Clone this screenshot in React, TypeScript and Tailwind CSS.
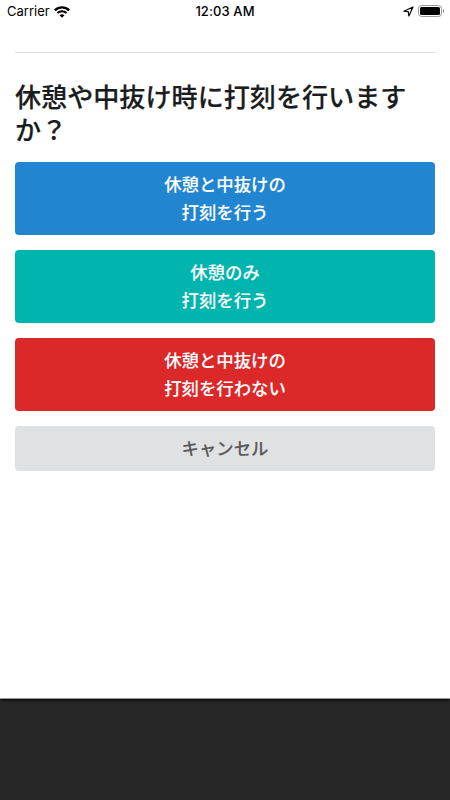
import clsx from "clsx";

const actions = [
  { lines: ["休憩と中抜けの", "打刻を行う"], color: "bg-[#2185d0]" },
  { lines: ["休憩のみ", "打刻を行う"], color: "bg-[#00b5ad]" },
  { lines: ["休憩と中抜けの", "打刻を行わない"], color: "bg-[#db2828]" },
];

const WifiIcon = () => (
  <svg width="16" height="12" viewBox="0 0 16 12" fill="none" stroke="#000">
    <path d="M0.8 4.4C4.8 0.4 11.2 0.4 15.2 4.4" strokeWidth="2.3" />
    <path d="M3.4 7.1C6 4.7 10 4.7 12.6 7.1" strokeWidth="2.1" />
    <path d="M8 11.8L5.5 9.3C6.9 8 9.1 8 10.5 9.3Z" fill="#000" stroke="none" />
  </svg>
);

const LocationIcon = () => (
  <svg width="11" height="11" viewBox="0 0 11 11" fill="none" stroke="#000">
    <path d="M10 1L0.9 5.2L5.2 5.7L5.9 10Z" strokeWidth="1.2" strokeLinejoin="round" />
  </svg>
);

const BatteryIcon = () => (
  <svg width="27" height="12" viewBox="0 0 27 12">
    <rect x="0.5" y="0.5" width="23" height="11" rx="3" fill="none" stroke="#999" />
    <rect x="2" y="2" width="20" height="8" rx="1.5" fill="#000" />
    <path d="M25 4C26.4 4.6 26.4 7.4 25 8Z" fill="#777" />
  </svg>
);

const StatusBar = () => (
  <div className="grid h-[23px] grid-cols-[1fr_auto_1fr] items-center font-['Inter',sans-serif] text-[13px] leading-[23px] text-black">
    <div className="flex items-center gap-1 pl-[7px]">
      <span>Carrier</span>
      <WifiIcon />
    </div>
    <div className="font-medium tracking-[0.1px]">12:03 AM</div>
    <div className="flex items-center justify-end gap-1 pb-px pr-[5px]">
      <LocationIcon />
      <BatteryIcon />
    </div>
  </div>
);

const App = () => {
  return (
    <div className="h-screen overflow-hidden bg-[#272727] font-['Noto_Sans_CJK_JP',sans-serif]">
      <div className="h-[699px] border-b border-[#999] bg-white shadow-[0_1px_3px_#000]">
        <StatusBar />
        <div className="px-[15px] pt-[29px]">
          <hr className="border-[#dededf]" />
          <h1 className="mt-[27px] text-[26.1px] font-medium leading-[33px] text-[#1b1c1d] [-webkit-text-stroke:0.2px_#1b1c1d]">
            休憩や中抜け時に打刻を行いますか？
          </h1>
          <div className="mt-4 flex flex-col gap-[15px]">
            {actions.map(({ lines, color }, i) => (
              <button
                key={i}
                className={clsx(
                  "h-[73px] w-full rounded-[4px] pb-[2px] text-[17.4px] font-medium leading-7 text-white [-webkit-text-stroke:0.1px_#fff]",
                  color
                )}
              >
                {lines.map((line) => (
                  <span key={line} className="block">
                    {line}
                  </span>
                ))}
              </button>
            ))}
            <button className="h-[45px] w-full rounded-[4px] bg-[#e0e1e2] pb-[2px] text-[17.4px] font-medium leading-7 text-[#595959] [-webkit-text-stroke:0.1px_#595959]">
              キャンセル
            </button>
          </div>
        </div>
      </div>
    </div>
  );
};

export default App;
